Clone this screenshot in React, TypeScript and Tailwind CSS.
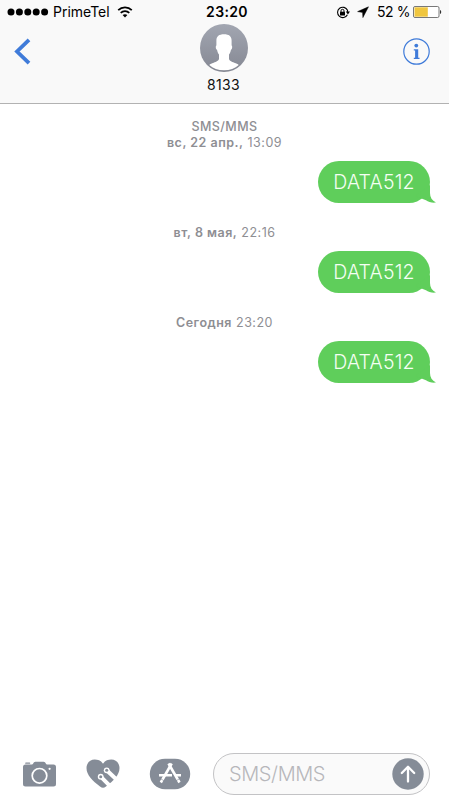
import React from "react";

type Message = {
  id: number;
  service?: string;
  date: string;
  time: string;
  text: string;
};

const messages: Message[] = [
  { id: 1, service: "SMS/MMS", date: "вс, 22 апр.,", time: "13:09", text: "DATA512" },
  { id: 2, date: "вт, 8 мая,", time: "22:16", text: "DATA512" },
  { id: 3, date: "Сегодня", time: "23:20", text: "DATA512" },
];

function StatusBar() {
  return (
    <div className="grid h-6 grid-cols-[200px_54px_1fr] items-center text-[14px] leading-6 text-black">
      <div className="flex items-center pl-[7px]">
        <svg width="42" height="8" viewBox="0 0 42 8" fill="#000">
          <circle cx="4" cy="4" r="3.5" />
          <circle cx="12.4" cy="4" r="3.5" />
          <circle cx="20.8" cy="4" r="3.5" />
          <circle cx="29.2" cy="4" r="3.5" />
          <circle cx="37.6" cy="4" r="3.5" />
        </svg>
        <span className="ml-1 w-[57px] whitespace-nowrap">PrimeTel</span>
        <svg className="ml-[7px]" width="16" height="12" viewBox="0 0 16 12" fill="none" stroke="#000" strokeWidth="1.7">
          <path d="M1.2 4.2C5 .4 11 .4 14.8 4.2" />
          <path d="M3.7 6.9C6.1 4.5 9.9 4.5 12.3 6.9" />
          <path d="M8 11.5 5.6 9.1C7 7.8 9 7.8 10.4 9.1Z" fill="#000" stroke="none" />
        </svg>
      </div>
      <div className="text-center text-[14px] font-semibold tracking-[0.35px]">23:20</div>
      <div className="flex items-center justify-end pr-[7px]">
        <svg width="15" height="13" viewBox="0 0 15 13" fill="none" stroke="#000">
          <path d="M11.4 8.8A5.2 5.2 0 1 1 11.5 4.3L11.7 6" strokeWidth="1.1" />
          <path d="M9.8 5.6H14L11.9 8.4Z" fill="#000" stroke="none" />
          <rect x="4" y="5.7" width="5" height="3.8" rx=".5" fill="#000" stroke="none" />
          <path d="M5 6V4.8a1.5 1.5 0 0 1 3 0V6" strokeWidth="1" />
        </svg>
        <svg className="ml-[6px]" width="12" height="12" viewBox="0 0 12 12" fill="#000">
          <path d="M11.5.8.6 5.6l5 .8.3 5.2Z" stroke="#000" strokeWidth=".5" />
        </svg>
        <span className="ml-2 w-[33px] whitespace-nowrap tracking-[-0.4px]">52 %</span>
        <svg className="ml-[3px]" width="29" height="12" viewBox="0 0 29 12">
          <rect x=".5" y=".5" width="25.5" height="11" rx="1.5" fill="#fff" stroke="#555" strokeWidth=".8" />
          <path d="M1.5 1.3H14.8V10.7H1.5Z" fill="#f0c63f" />
          <path d="M27 4c1.6.3 1.6 3.7 0 4Z" fill="#333" />
        </svg>
      </div>
    </div>
  );
}

function Avatar() {
  return (
    <svg width="48" height="48" viewBox="0 0 48 48">
      <defs>
        <linearGradient id="avatar" x1="0" y1="0" x2="0" y2="1">
          <stop offset="0" stopColor="#a2a6b1" />
          <stop offset="1" stopColor="#858893" />
        </linearGradient>
      </defs>
      <circle cx="24" cy="24" r="24" fill="url(#avatar)" />
      <path
        fill="#fff"
        d="M24 10.200c-5 0-7.600 2-7.600 6.300v5c-1 .4-.7 4 .7 4.400.4 2.300 1.100 3.700 1.900 4.700v4c0 2.200-2.700 3.300-5.300 4.100-2 .6-3.600 1.300-4.400 2.300C13 44.300 18 46.300 24 46.300S35 44.300 38.700 41c-.8-1-2.400-1.700-4.400-2.300-2.600-.8-5.300-1.900-5.300-4.100v-4c.8-1 1.500-2.400 1.900-4.700 1.400-.4 1.700-4 .7-4.400v-5c0-4.300-2.600-6.300-7.600-6.300Z"
      />
    </svg>
  );
}

function Header() {
  return (
    <header className="h-[104px] shrink-0 border-b border-[#b2b2b2] bg-[#f9f9f9]">
      <StatusBar />
      <div className="flex items-start justify-between pl-[14px] pr-[19px]">
        <button className="mt-[14px] w-[30px]" aria-label="Back">
          <svg width="18" height="27" viewBox="0 0 18 27" fill="none" stroke="#3f7bd9" strokeWidth="3.8">
            <path d="M15 1.800 3 13.500 15 25.200" />
          </svg>
        </button>
        <div className="flex flex-col items-center">
          <Avatar />
          <span className="mt-[3px] text-[14px] leading-[19px] tracking-[0.3px] text-[#111]">8133</span>
        </div>
        <button className="mt-[14px]" aria-label="Details">
          <svg width="27" height="27" viewBox="0 0 27 27">
            <circle cx="13.500" cy="13.500" r="12.700" fill="none" stroke="#3f7bd9" strokeWidth="1.200" />
            <circle cx="13.300" cy="7.600" r="1.900" fill="#3f7bd9" />
            <path d="M10.800 11.300h4.400v8.500h1.300v1.200h-5.700v-1.200h1.300v-7.300h-1.300Z" fill="#3f7bd9" />
          </svg>
        </button>
      </div>
    </header>
  );
}

function Bubble({ text }: { text: string }) {
  return (
    <div className="relative mr-[19px] flex h-[42px] w-[112px] items-center justify-center self-end rounded-[21px] bg-[#5fce5b]">
      <svg className="absolute -right-[6px] bottom-0" width="24" height="18" viewBox="0 0 24 18" fill="#5fce5b">
        <path d="M18 0v8c0 4.500 2 7.500 6 9.600-4 .5-7.500-.500-10-2.400L3 11Z" />
      </svg>
      <span className="relative text-[19.500px] font-light leading-[42px] tracking-[0.2px] text-[#f5fff3]">{text}</span>
    </div>
  );
}

function ComposeBar() {
  return (
    <footer className="flex h-[52px] shrink-0 items-center pl-[22px] pr-[19px]">
      <svg width="35" height="27" viewBox="0 0 35 27">
        <path
          fill="#858c97"
          d="M3.500 3.500H10c1 0 1.600-2.700 3.400-2.700h8.200c1.800 0 2.400 2.700 3.400 2.700h6.500a2.500 2.500 0 0 1 2.500 2.500v17a2.500 2.500 0 0 1-2.500 2.500h-28A2.500 2.500 0 0 1 1 23V6a2.500 2.500 0 0 1 2.500-2.500Z"
        />
        <rect x="3.200" y="1.500" width="5" height="1.300" rx=".6" fill="#858c97" />
        <circle cx="17.500" cy="14.800" r="7.300" fill="none" stroke="#fff" strokeWidth="1.700" />
        <circle cx="27.600" cy="7.800" r="1.100" fill="#fff" />
      </svg>
      <svg className="ml-[28px]" width="36" height="32" viewBox="0 0 36 32">
        <path
          fill="#858c97"
          d="M18 5.700C20.300 2.500 23.300 1.600 26.300 1.600c4.700 0 8.200 3.500 8.200 8.500 0 7.200-6 12.800-13.500 18.400-2.200 1.600-3.800 1.600-6 0C7.500 22.900 1.500 17.300 1.500 10.100c0-5 3.500-8.500 8.200-8.500 3 0 6 .9 8.300 4.100Z"
        />
        <g stroke="#fff" strokeWidth="4" fill="#fff">
          <path d="m21.700 12.300 13 12.200M15.700 18.700l13 13" />
          <circle cx="21.700" cy="12.300" r="2.900" stroke="none" />
          <circle cx="15.700" cy="18.700" r="2.900" stroke="none" />
        </g>
        <circle cx="21.700" cy="12.300" r="1.500" fill="#858c97" />
        <circle cx="15.700" cy="18.700" r="1.500" fill="#858c97" />
      </svg>
      <svg className="ml-[28px]" width="42" height="32" viewBox="0 0 42 32">
        <rect x=".8" y=".8" width="40.400" height="30.400" rx="15.200" fill="#858c97" />
        <g fill="none" stroke="#fff">
          <path d="M22.700 5.500 11.800 24.500" strokeWidth="2.600" />
          <path d="m19.500 5.500 11 19" strokeWidth="2.600" />
          <path d="M10 17.300h13m4 0h5" strokeWidth="2.400" />
        </g>
        <path d="m11.500 20.700 4 2.300M27 22.800l4-2.300" stroke="#858c97" strokeWidth=".6" />
      </svg>
      <div className="ml-[22px] flex h-[42px] flex-1 items-center justify-between rounded-full border border-[#c3c3c5] bg-[#fafafa] pl-[15px] pr-[5px]">
        <span className="text-[20px] font-light tracking-[-0.4px] text-[#b7b7bb]">SMS/MMS</span>
        <svg width="32" height="32" viewBox="0 0 32 32">
          <circle cx="16" cy="16" r="15.700" fill="#858c97" />
          <path d="M16 23.500V9M9.800 15 16 8.800l6.200 6.200" fill="none" stroke="#fff" strokeWidth="2.300" strokeLinecap="round" strokeLinejoin="round" />
        </svg>
      </div>
    </footer>
  );
}

export default function App() {
  return (
    <div className="flex h-[800px] w-[449px] flex-col overflow-hidden bg-white font-['Inter','Liberation_Sans',sans-serif]">
      <Header />
      <main className="flex flex-1 flex-col pt-[15px]">
        {messages.map((m) => (
          <section key={m.id} className="mb-[22px] flex flex-col">
            <div className="mb-[10px] text-center text-[12.500px] leading-4 tracking-[0.5px] text-[#8e8e93]">
              {m.service && <div className="font-medium tracking-[0.4px]">{m.service}</div>}
              <span className="font-semibold">{m.date}</span> {m.time}
            </div>
            <Bubble text={m.text} />
          </section>
        ))}
      </main>
      <ComposeBar />
    </div>
  );
}
